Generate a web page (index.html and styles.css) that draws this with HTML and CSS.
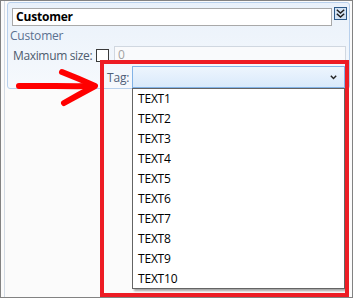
FILE: index.html
```html
<!DOCTYPE html>
<html lang="en">
<head>
    <meta charset="UTF-8">
    <title>Customer</title>
    <link rel="stylesheet" href="styles.css">
</head>
<body>
    <div class="frame">
        <div class="panel">
            <div class="head">
                <div class="name-box">Customer</div>
                <button class="collapse">
                    <svg width="13" height="13" viewBox="0 0 13 13">
                        <rect x="0.5" y="0.5" width="12" height="12" fill="#d3e3f4" stroke="#2c5a8a"/>
                        <polyline points="2.8,2.8 6.5,6 10.2,2.8" fill="none" stroke="#1c1c1c" stroke-width="1.5"/>
                        <polyline points="2.8,6.8 6.5,10 10.2,6.8" fill="none" stroke="#1c1c1c" stroke-width="1.5"/>
                    </svg>
                </button>
            </div>
            <div class="caption">Customer</div>
            <div class="field-row">
                <span class="field-label">Maximum size:</span>
                <span class="check"></span>
                <div class="num-box">0</div>
            </div>
            <div class="tag-row">
                <span class="field-label">Tag:</span>
                <div class="combo">
                    <svg class="combo-arrow" width="7" height="5" viewBox="0 0 7 5">
                        <polyline points="0.8,0.8 3.5,3.6 6.2,0.8" fill="none" stroke="#222" stroke-width="1.4"/>
                    </svg>
                    <ul class="dropdown">
                        <li>TEXT1</li>
                        <li>TEXT2</li>
                        <li>TEXT3</li>
                        <li>TEXT4</li>
                        <li>TEXT5</li>
                        <li>TEXT6</li>
                        <li>TEXT7</li>
                        <li>TEXT8</li>
                        <li>TEXT9</li>
                        <li>TEXT10</li>
                    </ul>
                </div>
            </div>
        </div>
    </div>

    <div class="callout"></div>
    <svg class="arrow" width="110" height="110" viewBox="0 0 110 110">
        <path d="M19,86 C40,85.5 70,86.5 92,86" fill="none" stroke="#ff0000" stroke-width="6" stroke-linecap="round"/>
        <path d="M62,72 Q80,79 95,86 Q80,94 64,103" fill="none" stroke="#ff0000" stroke-width="6" stroke-linecap="round" stroke-linejoin="round"/>
    </svg>
</body>
</html>
```

FILE: styles.css
```css
* {
    margin: 0;
    padding: 0;
    box-sizing: border-box;
}

body {
    width: 353px;
    height: 298px;
    border: 1px solid #828282;
    background: #fbfbfb;
    font-family: 'Open Sans', 'Noto Sans', sans-serif;
    font-size: 12px;
    letter-spacing: -0.2px;
    color: #000;
    overflow: hidden;
}

.frame {
    height: 100%;
    margin-left: 3px;
    padding: 1px 0 0 2px;
    border-left: 1px solid #d3dbe5;
}

.panel {
    width: 343px;
    height: 87px;
    padding-top: 5px;
    border: 1px solid #b8d0ec;
    border-radius: 3px;
    background: linear-gradient(#e9f1fa, #f6f9fd);
}

.head {
    display: flex;
    align-items: flex-start;
    gap: 2px;
    padding: 0 2px 0 4px;
}

.name-box {
    flex: 1;
    height: 18px;
    padding-left: 3px;
    border: 1px solid #a9a9a9;
    background: #fff;
    font-weight: bold;
    line-height: 16px;
}

.collapse {
    display: block;
    width: 13px;
    height: 13px;
    margin-top: -1px;
    border: 0;
    background: none;
}

.collapse svg {
    display: block;
}

.caption {
    height: 20px;
    padding-left: 2px;
    line-height: 20px;
    color: #5b7190;
}

.field-label {
    color: #4d5b6e;
}

.field-row {
    display: flex;
    align-items: center;
    height: 18px;
    padding: 0 3px 0 5px;
}

.field-row .field-label {
    width: 83px;
    letter-spacing: -0.35px;
}

.check {
    width: 13px;
    height: 13px;
    margin-right: 5px;
    border: 1px solid #3a3a3a;
    background: #fff;
}

.num-box {
    flex: 1;
    height: 18px;
    padding-left: 3px;
    border: 1px solid #d0d7e0;
    background: #f9fafc;
    line-height: 16px;
    color: #a3a3a3;
}

.tag-row {
    display: flex;
    align-items: center;
    height: 22px;
    margin-top: 2px;
    padding-left: 99px;
}

.tag-row .field-label {
    width: 25px;
    color: #4f6079;
}

.combo {
    position: relative;
    width: 213px;
    height: 22px;
    border: 1px solid #82b3e6;
    background: linear-gradient(#edf5fd, #d9eafb);
}

.combo-arrow {
    position: absolute;
    right: 7px;
    top: 8px;
}

.dropdown {
    position: absolute;
    left: -1px;
    top: 100%;
    width: 213px;
    height: 201px;
    margin-top: 1px;
    list-style: none;
    border: 1px solid #646464;
    background: #fff;
    box-shadow: 2px 2px 2px rgba(0, 0, 0, 0.35);
}

.dropdown li {
    height: 20px;
    padding-left: 5px;
    line-height: 20px;
}

.callout {
    position: absolute;
    left: 100px;
    top: 60px;
    width: 249px;
    height: 237px;
    border: 4px solid #ed1c24;
    pointer-events: none;
}

.arrow {
    position: absolute;
    left: 0;
    top: 0;
    pointer-events: none;
}
```
